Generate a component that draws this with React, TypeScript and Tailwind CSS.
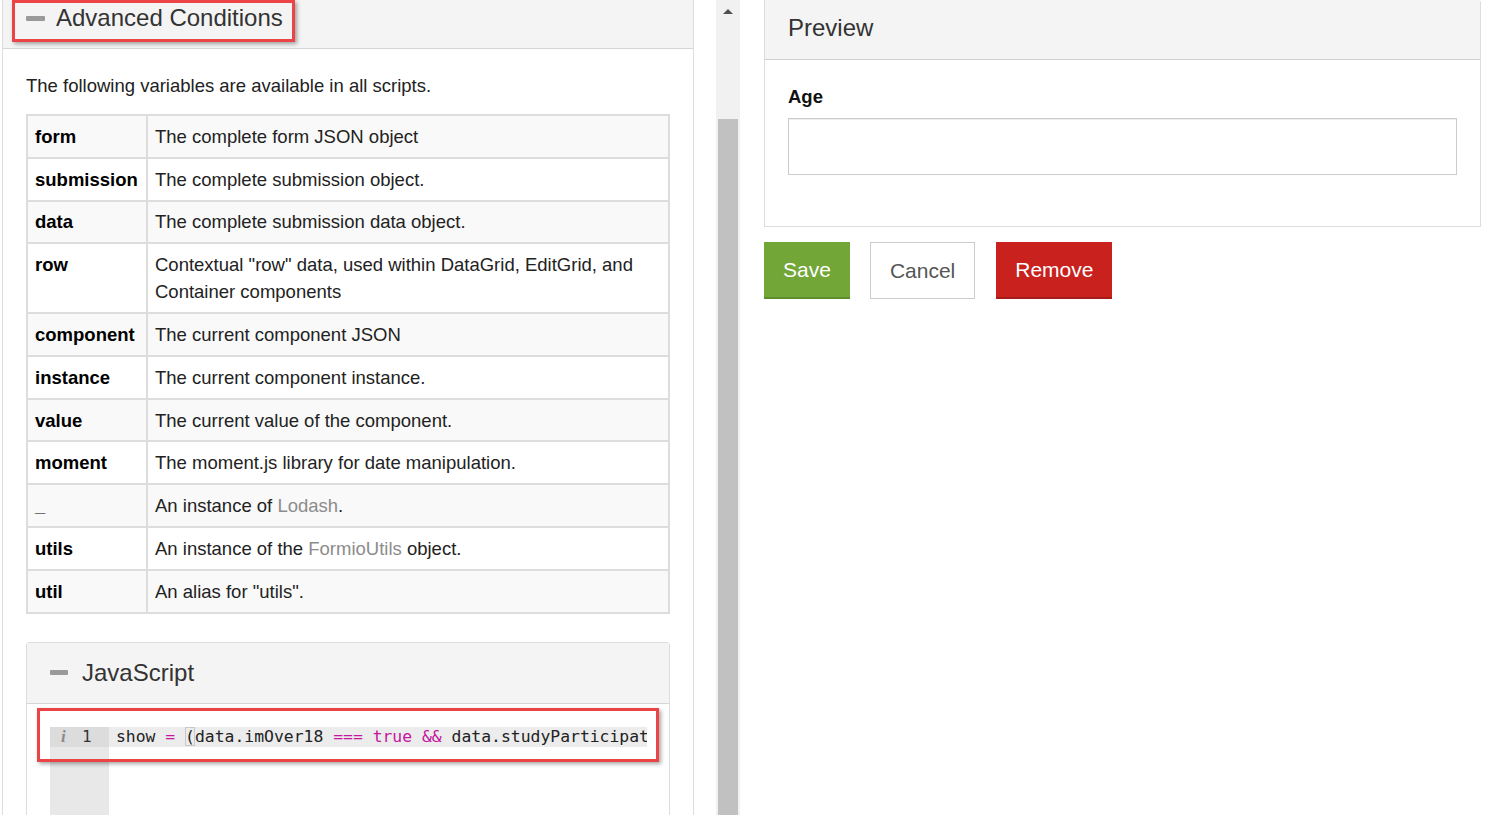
import React from "react";

const rows: { k: string; v: React.ReactNode; tall?: boolean }[] = [
  { k: "form", v: "The complete form JSON object" },
  { k: "submission", v: "The complete submission object." },
  { k: "data", v: "The complete submission data object." },
  { k: "row", v: 'Contextual "row" data, used within DataGrid, EditGrid, and Container components' },
  { k: "component", v: "The current component JSON" },
  { k: "instance", v: "The current component instance." },
  { k: "value", v: "The current value of the component." },
  { k: "moment", v: "The moment.js library for date manipulation." },
  {
    k: "_",
    v: (
      <>
        An instance of <span className="text-[#8c8c8c]">Lodash</span>.
      </>
    ),
  },
  {
    k: "utils",
    v: (
      <>
        An instance of the <span className="text-[#8c8c8c]">FormioUtils</span> object.
      </>
    ),
  },
  { k: "util", v: 'An alias for "utils".' },
];

function Minus({ w }: { w: string }) {
  return <span className={`inline-block h-[5px] ${w} rounded-[1px] bg-[#9a9a9a]`} />;
}

export default function App() {
  return (
    <div
      className="flex h-[815px] w-[1496px] overflow-hidden bg-white text-[#333]"
      style={{ fontFamily: '"Liberation Sans", Arial, sans-serif' }}
    >
      {/* Left panel */}
      <div className="relative ml-[2px] w-[692px] shrink-0 border-x border-[#dddddd]">
        <div className="relative flex h-[49px] items-start border-b border-[#d5d5d5] bg-[#f4f4f4] pl-[23px] pt-[4px]">
          <div className="flex items-center gap-[11px] text-[24px] leading-[28px] text-[#333]">
            <Minus w="w-[19px]" />
            <span>Advanced Conditions</span>
          </div>
          <div className="absolute left-[9px] top-[0px] h-[42px] w-[283px] border-[3px] border-[#ea4446] shadow-[2px_2px_4px_rgba(0,0,0,0.35)]" />
        </div>

        <div className="px-[23px] pt-[23px]">
          <p className="mb-[15px] text-[18.5px] leading-[27px] text-[#222]">
            The following variables are available in all scripts.
          </p>
          <table className="w-full border-collapse text-[18.5px] leading-[27px]">
            <tbody>
              {rows.map((r, i) => (
                <tr key={r.k} className={i % 2 === 0 ? "bg-[#f9f9f9]" : "bg-white"}>
                  <td className="w-[120px] border-2 border-[#dddddd] px-[7px] py-[6.9px] align-top font-bold text-[#000]">
                    {r.k}
                  </td>
                  <td className="border-2 border-[#dddddd] px-[7px] py-[6.9px] align-top text-[#222]">{r.v}</td>
                </tr>
              ))}
            </tbody>
          </table>

          {/* JavaScript panel */}
          <div className="mt-[28px] h-[300px] rounded-t-[3px] border border-[#dddddd]">
            <div className="flex h-[61px] items-center gap-[14px] border-b border-[#d5d5d5] bg-[#f4f4f4] pl-[23px]">
              <Minus w="w-[18px]" />
              <span className="text-[24px] leading-[28px] text-[#333]">JavaScript</span>
            </div>
            <div className="relative px-[22px] pl-[23px] pt-[23px]">
              <div className="flex h-[200px]" style={{ fontFamily: '"DejaVu Sans Mono", "Liberation Mono", monospace' }}>
                <div className="w-[59px] shrink-0 bg-[#e8e8e8]">
                  <div className="flex h-[20px] items-center bg-[#dcdcdc] pl-[11px] text-[16px] leading-[20px] text-[#333]">
                    <span
                      className="w-[21px] text-[17px] font-bold italic text-[#8a8a8a]"
                      style={{ fontFamily: '"Liberation Serif", serif' }}
                    >
                      i
                    </span>
                    <span>1</span>
                  </div>
                </div>
                <div className="flex-1 overflow-hidden">
                  <div className="h-[20px] whitespace-pre bg-[#ececec] pl-[7px] text-[16.4px] leading-[20px] text-[#222]">
                    show <span className="text-[#c4169f]">=</span>{" "}
                    <span className="outline outline-1 -outline-offset-1 outline-[#c8c8c8]">(</span>data.imOver18{" "}
                    <span className="text-[#c4169f]">===</span> <span className="text-[#c4169f]">true</span>{" "}
                    <span className="text-[#c4169f]">&amp;&amp;</span> data.studyParticipation
                  </div>
                </div>
              </div>
              <div className="absolute left-[10px] top-[4px] h-[54px] w-[622px] border-[3px] border-[#ea4446] shadow-[2px_2px_4px_rgba(0,0,0,0.35)]" />
            </div>
          </div>
        </div>
      </div>

      {/* Scrollbar */}
      <div className="ml-[22px] flex w-[24px] shrink-0 flex-col bg-[#f1f1f1]">
        <div className="flex h-[119px] justify-center pt-[9px]">
          <div className="h-0 w-0 border-x-[5px] border-b-[5px] border-x-transparent border-b-[#505050]" />
        </div>
        <div className="mx-[2px] flex-1 bg-[#c1c1c1]" />
      </div>

      {/* Right column */}
      <div className="ml-[24px] w-[717px] shrink-0">
        <div className="rounded-tr-[3px] border border-t-0 border-[#dddddd]">
          <div className="flex h-[60px] items-center border-b border-[#d0d0d0] bg-[#f4f4f4] pb-[3px] pl-[23px]">
            <span className="text-[24px] leading-[28px] text-[#333]">Preview</span>
          </div>
          <div className="px-[23px] pb-[23px] pt-[23px]">
            <div className="mb-[8px] text-[18.5px] font-bold leading-[27px] text-[#111]">Age</div>
            <div className="mb-[28px] h-[57px] w-full border border-[#cccccc] bg-white shadow-[inset_0_1px_1px_rgba(0,0,0,0.075)]" />
          </div>
        </div>
        <div className="mt-[15px] flex gap-[20px] text-[21px] leading-[24px]">
          <button className="h-[57px] border-b-2 border-[#5e8d2a] bg-[#72a637] px-[19px] text-white">Save</button>
          <button className="h-[57px] border border-[#cccccc] bg-white px-[19px] text-[#555]">Cancel</button>
          <button className="ml-[1px] h-[57px] border-b-2 border-[#a51b18] bg-[#c9211e] px-[19px] text-white">
            Remove
          </button>
        </div>
      </div>
    </div>
  );
}
